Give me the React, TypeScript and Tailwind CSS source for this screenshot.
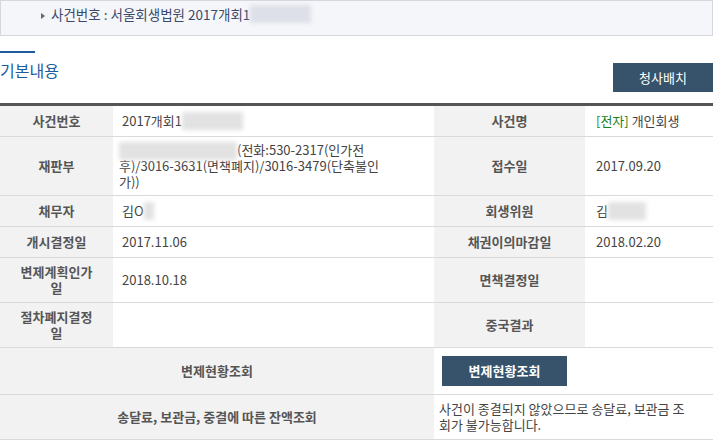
import React from 'react';

const Blur = ({ w, tone = 'bg-[#e2e2e2]' }: { w: string; tone?: string }) => (
  <span className={`inline-block ${w} h-[18px] -my-[2px] align-middle ${tone} blur-[2px]`} />
);

function Label({ w, h, children }: { w: string; h?: string; children: React.ReactNode }) {
  return (
    <div className={`${w} ${h ?? ''} shrink-0 bg-[#f2f2f2] flex items-center justify-center text-center px-[12px] font-bold text-[#555] leading-[16px]`}>
      {children}
    </div>
  );
}

function Value({ w, pl = 'pl-[9px]', children }: { w: string; pl?: string; children?: React.ReactNode }) {
  return (
    <div className={`${w} shrink-0 bg-white flex items-center ${pl} pr-[8px] text-[#444] leading-[16px]`}>
      {children}
    </div>
  );
}

function Row({ h, children }: { h: string; children: React.ReactNode }) {
  return <div className={`flex ${h} border-b border-[#dadada]`}>{children}</div>;
}

export default function App() {
  return (
    <div className="w-[713px] min-h-[444px] bg-white overflow-hidden font-['Noto_Sans_CJK_KR',sans-serif] text-[13px]">
      <div className="h-[36px] border border-[#d4d7de] bg-[#f5f6fa] flex items-center pl-[40px] pb-[8px] text-[#3b4a6a]">
        <span className="mr-[6px] mt-[4px] inline-block border-l-[4px] border-y-[3px] border-y-transparent border-l-[#666]" />
        <span className="leading-[20px] text-[13.5px]">사건번호 : 서울회생법원 2017개회1</span>
        <Blur w="w-[61px]" tone="bg-[#dde0e8]" />
      </div>

      <div className="flex justify-between h-[67px]">
        <div className="pt-[15px]">
          <div className="w-[35px] h-[2px] bg-[#1f5c9e]" />
          <h2 className="mt-[7px] leading-[20px] text-[16px] text-[#1f5c9e]">기본내용</h2>
        </div>
        <div className="pt-[27px]">
          <button className="w-[100px] h-[29px] bg-[#36536b] text-white text-[13px] leading-[29px]">청사배치</button>
        </div>
      </div>

      <div className="h-[3px] bg-[#555]" />

      <Row h="h-[31px]">
        <Label w="w-[113px]">사건번호</Label>
        <Value w="w-[321px]">
          2017개회1<Blur w="w-[61px]" />
        </Value>
        <Label w="w-[151px]">사건명</Label>
        <Value w="w-[128px]" pl="pl-[11px]">
          <span className="text-[#1b7f1b]">[전자]</span>&nbsp;개인회생
        </Value>
      </Row>

      <Row h="h-[59px]">
        <Label w="w-[113px]">재판부</Label>
        <Value w="w-[321px]" pl="pl-[6px]">
          <div className="leading-[16px]">
            <Blur w="w-[118px]" />
            (전화:530-2317(인가전
            <br />
            후)/3016-3631(면책폐지)/3016-3479(단축불인
            <br />
            가))
          </div>
        </Value>
        <Label w="w-[151px]">접수일</Label>
        <Value w="w-[128px]" pl="pl-[11px]">2017.09.20</Value>
      </Row>

      <Row h="h-[31px]">
        <Label w="w-[113px]">채무자</Label>
        <Value w="w-[321px]">
          김O<Blur w="w-[10px]" />
        </Value>
        <Label w="w-[151px]">회생위원</Label>
        <Value w="w-[128px]" pl="pl-[11px]">
          김<Blur w="w-[38px]" />
        </Value>
      </Row>

      <Row h="h-[31px]">
        <Label w="w-[113px]">개시결정일</Label>
        <Value w="w-[321px]">2017.11.06</Value>
        <Label w="w-[151px]">채권이의마감일</Label>
        <Value w="w-[128px]" pl="pl-[11px]">2018.02.20</Value>
      </Row>

      <Row h="h-[45px]">
        <Label w="w-[113px]">
          변제계획인가
          <br />일
        </Label>
        <Value w="w-[321px]">2018.10.18</Value>
        <Label w="w-[151px]">면책결정일</Label>
        <Value w="w-[128px]" />
      </Row>

      <Row h="h-[45px]">
        <Label w="w-[113px]">
          절차폐지결정
          <br />일
        </Label>
        <Value w="w-[321px]" />
        <Label w="w-[151px]">중국결과</Label>
        <Value w="w-[128px]" />
      </Row>

      <Row h="h-[47px]">
        <Label w="w-[434px]">변제현황조회</Label>
        <Value w="w-[279px]" pl="pl-[8px]">
          <button className="w-[125px] h-[30px] bg-[#36536b] text-white font-bold text-[13px]">변제현황조회</button>
        </Value>
      </Row>

      <Row h="h-[45px]">
        <Label w="w-[434px]">송달료, 보관금, 중결에 따른 잔액조회</Label>
        <Value w="w-[279px]" pl="pl-[5px]">
          <div className="leading-[16px]">
            사건이 종결되지 않았으므로 송달료, 보관금 조<br />회가 불가능합니다.
          </div>
        </Value>
      </Row>
    </div>
  );
}
